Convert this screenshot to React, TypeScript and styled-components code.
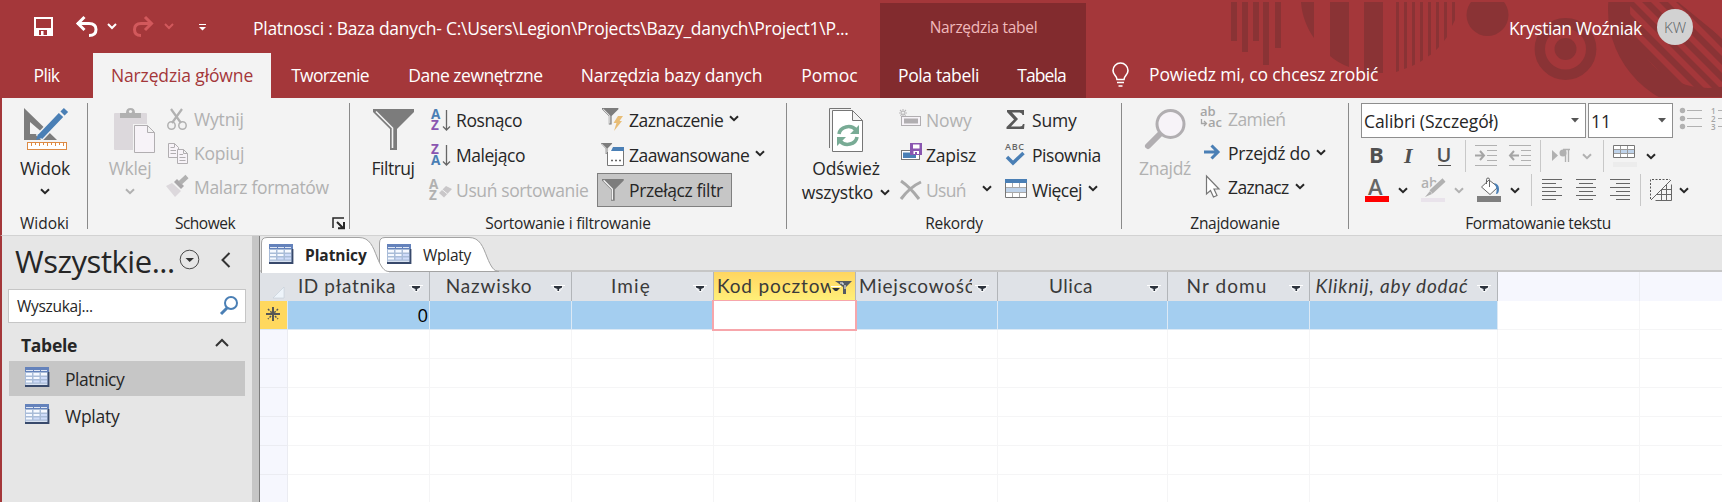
import React from 'react';
import styled, { createGlobalStyle, css } from 'styled-components';

const GlobalStyle = createGlobalStyle`
  * { box-sizing: border-box; }
  body { margin: 0; background: #fff; overflow: hidden; }
  svg { display: block; flex: none; overflow: visible; }
`;

const red = '#a4373a';
const ink = '#262626';
const muted = '#b1b1b1';
const gray = '#767676';
const blue = '#4a7fb5';

const Window = styled.div`
  width: 1722px;
  height: 502px;
  display: flex;
  flex-direction: column;
  overflow: hidden;
  font-family: 'Open Sans', 'Noto Sans', sans-serif;
  font-size: 17.5px;
  line-height: 24px;
  color: ${ink};
  white-space: nowrap;
`;

const Text = styled.span<{ $track?: number }>`
  letter-spacing: ${(p) => p.$track ?? -0.35}px;
  white-space: pre;
`;

/* ---------- title bar ---------- */
const Header = styled.header`
  position: relative;
  height: 98px;
  background: ${red};
  color: #fff;
`;
const Backdrop = styled.svg`
  position: absolute;
  inset: 0;
`;
const TitleBar = styled.div`
  position: relative;
  height: 53px;
  display: flex;
`;
const QuickAccess = styled.div`
  width: 253px;
  padding: 16px 0 0 33px;
  display: flex;
`;
const Caption = styled.div`
  width: 627px;
  padding-top: 16px;
`;
const ContextTitle = styled.div`
  width: 206px;
  margin-top: 3px;
  padding: 12px 0 0 1px;
  text-align: center;
  background: #822b2e;
  color: #f0b9bb;
  font-size: 15.5px;
`;
const Account = styled.div`
  margin-left: auto;
  width: 213px;
  display: flex;
  padding-top: 9px;
`;
const UserName = styled.div`
  padding-top: 7px;
  width: 148px;
`;
const Avatar = styled.div`
  width: 36px;
  height: 36px;
  border-radius: 50%;
  background: #d2d2d2;
  color: #5c6266;
  font-size: 15px;
  font-weight: 300;
  line-height: 36px;
  text-align: center;
`;
const TabStrip = styled.nav`
  position: relative;
  height: 45px;
  display: flex;
`;
const RibbonTab = styled.div<{ $w: number; $active?: boolean; $context?: boolean }>`
  width: ${(p) => p.$w}px;
  text-align: center;
  line-height: 45px;
  ${(p) => p.$active && css`background: #f3f3f3; color: ${red};`}
  ${(p) => p.$context && css`background: #822b2e;`}
`;
const TellMe = styled.div`
  display: flex;
  padding: 8px 0 0 25px;
  gap: 19px;
  line-height: 26px;
`;

/* ---------- ribbon ---------- */
const Ribbon = styled.section`
  height: 138px;
  display: flex;
  background: #f3f3f3;
  border-left: 2px solid ${red};
  border-bottom: 1px solid #d2d2d2;
  padding-top: 5px;
`;
const Group = styled.div<{ $w: number; $last?: boolean }>`
  flex: none;
  width: ${(p) => p.$w}px;
  height: 126px;
  display: flex;
  flex-direction: column;
  border-right: ${(p) => (p.$last ? 'none' : '1px solid #8a8a8a')};
`;
const GroupBody = styled.div`
  height: 115px;
  margin-top: -1px;
  display: flex;
`;
const GroupLabel = styled.div<{ $trail?: number }>`
  height: 12px;
  line-height: 12px;
  display: flex;
  justify-content: center;
  font-size: 15.5px;
  padding-right: ${(p) => p.$trail ?? 0}px;
`;
const LabelRow = styled.div`
  display: flex;
  & > :first-child { flex: 1; padding-right: 10px; }
`;
const BigButton = styled.div<{ $w: number; $left?: number; $off?: boolean }>`
  flex: none;
  width: ${(p) => p.$w}px;
  margin-left: ${(p) => p.$left ?? 0}px;
  padding-top: 5px;
  display: flex;
  flex-direction: column;
  align-items: center;
  color: ${(p) => (p.$off ? muted : ink)};
  & > svg:first-child { margin-bottom: 3px; }
`;
const BigArrow = styled.div`
  margin-top: 8px;
`;
const Inline = styled.div`
  display: flex;
  align-items: center;
  gap: 7px;
`;
const Column = styled.div<{ $w: number; $left?: number }>`
  flex: none;
  width: ${(p) => p.$w}px;
  margin-left: ${(p) => p.$left ?? 0}px;
`;
const Command = styled.div<{ $off?: boolean; $compact?: boolean; $on?: boolean; $icon?: number; $gap?: number }>`
  height: ${(p) => (p.$compact ? 34 : 35)}px;
  display: flex;
  align-items: center;
  color: ${(p) => (p.$off ? muted : ink)};
  & > svg:first-child { margin-right: ${(p) => p.$icon ?? 4}px; }
  & > svg:last-child:not(:first-child) { margin-left: ${(p) => p.$gap ?? 6}px; margin-top: -2px; }
  ${(p) => p.$on && css`
    width: 135px;
    height: 34px;
    margin: 1px 0 0 -5px;
    padding-left: 4px;
    background: #c6c6c6;
    border: 1px solid #7f7f7f;
  `}
`;

/* ---------- text formatting ---------- */
const FontRow = styled.div`
  display: flex;
  gap: 2px;
  height: 36px;
  padding-top: 1px;
  overflow: visible;
`;
const Combo = styled.div<{ $w: number }>`
  flex: none;
  width: ${(p) => p.$w}px;
  height: 35px;
  background: #fff;
  border: 1px solid #8e8e8e;
  display: flex;
  align-items: center;
  justify-content: space-between;
  padding: 1px 6px 0 2px;
`;
const Tools = styled.div`
  display: flex;
  height: 34px;
  margin-top: 1px;
  align-items: center;
  & + & { margin-top: 0; }
`;
const Tool = styled.div<{ $w: number }>`
  flex: none;
  width: ${(p) => p.$w}px;
`;
const Rule = styled.div`
  width: 1px;
  height: 32px;
  margin-right: 9px;
  background: #c8c8c8;
`;

/* ---------- navigation pane ---------- */
const Workspace = styled.main`
  height: 266px;
  display: flex;
  border-left: 2px solid ${red};
`;
const NavPane = styled.aside`
  flex: none;
  width: 250px;
  background: #e6e6e6;
`;
const Splitter = styled.div`
  flex: none;
  width: 8px;
  background: #c6c6c6;
  border-right: 1px solid #7d7d7d;
`;
const NavTitle = styled.div`
  height: 53px;
  display: flex;
  padding-left: 13px;
  font-size: 31px;
  line-height: 50px;
`;
const NavMenu = styled.div`
  padding: 13px 0 0 4px;
  width: 46px;
`;
const NavClose = styled.div`
  padding: 16px 0 0 0;
`;
const Search = styled.div`
  width: 238px;
  height: 34px;
  margin-left: 6px;
  display: flex;
  justify-content: space-between;
  background: #fff;
  border: 1px solid #c6c6c6;
  font-size: 15.5px;
  line-height: 33px;
  padding: 0 6px 0 8px;
  & svg { margin-top: 5px; }
`;
const NavSection = styled.div`
  height: 38px;
  display: flex;
  justify-content: space-between;
  padding: 0 22px 0 19px;
  font-weight: 700;
  line-height: 45px;
  & svg { margin: 15px 1px 0 0; }
`;
const NavItem = styled.div<{ $on?: boolean }>`
  width: 236px;
  height: ${(p) => (p.$on ? 35 : 39)}px;
  margin-left: 7px;
  padding-left: 16px;
  display: flex;
  align-items: center;
  background: ${(p) => (p.$on ? '#c6c6c6' : 'transparent')};
  & svg { margin: -4px 16px 0 0; }
`;

/* ---------- document area ---------- */
const Documents = styled.section`
  flex: 1;
  min-width: 0;
  overflow: hidden;
`;
const DocTabs = styled.div`
  height: 36px;
  display: flex;
  padding-left: 1px;
  background: linear-gradient(#e6e6e6 34px, #c6c6c6 34px);
`;
const DocTab = styled.div<{ $front?: boolean }>`
  position: relative;
  z-index: ${(p) => (p.$front ? 2 : 1)};
  width: 118px;
  height: 36px;
  padding: 2px 0 0 8px;
  display: flex;
  align-items: center;
  font-size: 15.5px;
  font-weight: ${(p) => (p.$front ? 700 : 400)};
`;
const TabShape = styled.svg`
  position: absolute;
  left: 0;
  top: 0;
`;
const TabFace = styled.div`
  position: relative;
  display: flex;
  align-items: center;
  gap: 12px;
  & svg { margin-top: -3px; }
`;
const Sheet = styled.div`
  display: grid;
  grid-template-columns: 28px repeat(5, 142px) 170px 142px 188px 142px 142px;
  grid-auto-rows: 29px;
  background: #fff;
`;
const HeadCell = styled.div<{ $tone?: 'key' | 'blank' | 'corner' }>`
  display: flex;
  align-items: center;
  overflow: hidden;
  font-family: Lato, 'Open Sans', sans-serif;
  font-size: 19px;
  color: #3a3a3a;
  background: ${(p) =>
    p.$tone === 'key' ? 'linear-gradient(#ffd560, #fff07a)' : p.$tone === 'blank' ? '#f6f7fe' : '#dfe2e7'};
  border-right: 1px solid ${(p) => (p.$tone === 'blank' ? '#ebecf2' : p.$tone === 'corner' ? '#dfe2e7' : '#b2b5b9')};
`;
const HeadTitle = styled.div<{ $start?: boolean; $w?: number }>`
  ${(p) => (p.$w ? `width: ${p.$w}px;` : 'flex: 1;')}
  min-width: 0;
  overflow: hidden;
  text-align: ${(p) => (p.$start ? 'left' : 'center')};
  padding: 0 0 2px ${(p) => (p.$start ? 3 : 0)}px;
`;
const HeadArrow = styled.div`
  width: 23px;
  padding: 2px 0 0 3px;
`;
const FilterArrow = styled.div`
  width: 24px;
  margin-left: -1px;
`;
const Cell = styled.div<{ $kind?: 'new' | 'input' | 'marker' | 'gutter' }>`
  border-right: 1px solid #f5f5f6;
  border-bottom: 1px solid #f5f5f6;
  text-align: right;
  line-height: 28px;
  font-size: 18.5px;
  color: #000;
  padding-right: 1px;
  ${(p) => p.$kind === 'new' && css`background: #a4cef0; border-color: #dce9f5;`}
  ${(p) => p.$kind === 'gutter' && css`background: #f6f7fe; border-color: #ebecf2;`}
  ${(p) => p.$kind === 'marker' && css`background: #ffd85e; border-color: #dce9f5; padding: 5px 0 0 5px;`}
  ${(p) => p.$kind === 'input' && css`
    position: relative;
    z-index: 1;
    background: #fff;
    border-color: #f7a6ab;
    box-shadow: 0 0 0 1px #f7a6ab, -1px 0 0 1px #f7a6ab;
  `}
`;

/* ---------- icons ---------- */
const Chevron = ({ c = ink }: { c?: string }) => (
  <svg width="10" height="7" viewBox="0 0 10 7"><path d="M1 1.2 5 5.2 9 1.2" fill="none" stroke={c} strokeWidth="2" /></svg>
);
const Glyph = ({ w = 24, h = 24, children }: { w?: number; h?: number; children: React.ReactNode }) => (
  <svg width={w} height={h} viewBox={`0 0 ${w} ${h}`} fontFamily="Open Sans, sans-serif">{children}</svg>
);
const TableIcon = () => (
  <Glyph w={24} h={20}>
    <rect width="24" height="20" fill="#a9bcd8" />
    <path d="M0 0H24V5H0z" fill="#6482bb" />
    <path d="M1 3.5H8M9 3.5H15M16 3.5H22" stroke="#dfe7f4" />
    <g fill="#f6f9ff">
      <path d="M1 6H7V8.5H1zM1 10H7V12H1zM1 13.500H7V15.500H1z" />
      <path d="M8.500 6H14.500V8.500H8.500zM8.500 10H14.500V12H8.500z" />
      <path d="M16 6H22V8.500H16z" />
    </g>
    <g fill="#cfdcfa"><path d="M8.500 13.500H14.500V15.500H8.500zM16 10H22V12H16zM16 13.500H22V15.500H16z" /></g>
    <path d="M1 17.300H22" stroke="#e4ebf8" strokeWidth="1" />
    <path d="M0 19H23.500V5" fill="none" stroke="#38496b" strokeWidth="1.800" />
  </Glyph>
);
const Funnel = ({ s = 1 }: { s?: number }) => (
  <g transform={`scale(${s})`}>
    <path d="M0 0H41V3L24 20V41H17V20L0 3z" fill="#7c7c7c" />
    <path d="M3 2.500 19.500 19V39" fill="none" stroke="#f3f3f3" strokeWidth={s < 1 ? 2.5 : 1.6} />
  </g>
);
const DropArrow = () => (
  <Glyph w={14} h={8}>
    <path d="M0 1.500H14" stroke="#fff" />
    <path d="M3 2H11V3.500L8 5V7H6.500V5L3 3.500z" fill="#2c323c" />
    <path d="M2 3 6 7.500H8.500L12 3" fill="none" stroke="#fff" strokeWidth=".8" />
  </Glyph>
);
const SortLetters = ({ top, bottom, a, b, x = 0 }: { top: string; bottom: string; a: string; b: string; x?: number }) => (
  <g fontSize="13.500" fontWeight="700">
    <text x={x} y="11" fill={a}>{top}</text>
    <text x={x} y="22" fill={b}>{bottom}</text>
  </g>
);
const Lines = ({ rows, c = '#666' }: { rows: [number, number][]; c?: string }) => (
  <Glyph w={22} h={22}>
    {rows.map(([x1, x2], i) => <path key={i} d={`M${x1} ${0.5 + i * 4}H${x2}`} stroke={c} />)}
  </Glyph>
);

const BackdropArt = () => (
  <Backdrop width="1722" height="98" viewBox="0 0 1722 98">
    <defs>
      <clipPath id="strip"><rect y="2" width="1722" height="95" /></clipPath>
      <clipPath id="bowl"><circle cx="1708" cy="10" r="78" /></clipPath>
    </defs>
    <g fill="#8a3335" clipPath="url(#strip)">
      <path d="M1231 2h6v39h-6zM1242 2h6v50h-6zM1253 2h6v39h-6zM1263 2h6v63h-6zM1275 2h6v46h-6z" />
      <path d="M1301 2h13v36C1307 28 1302 16 1301 2zM1330 2h19V67Q1338 63 1330 56zM1364 2h19V73H1364z" />
      <path d="M1396 2h3V71l-3 1zM1404 2h3V68l-3 1zM1412 2h3V64.500l-3 1.500zM1420 2h3V60l-3 2zM1428 2h3V54.500l-3 2zM1436 2h3V47l-3 3zM1444 2h3V37l-3 4zM1452 2h3V20l-3 6z" />
      <circle cx="1487.500" cy="15" r="21" />
      <circle cx="1565.500" cy="49" r="25.700" fill="none" stroke="#8a3335" strokeWidth="10.400" />
      <circle cx="1565.500" cy="49" r="11" />
      <circle cx="1708" cy="10" r="100" />
      <g clipPath="url(#bowl)" stroke={red} strokeWidth="5.700">
        <path d="M1603 0 1703 100M1620 0 1720 100M1636 0 1736 100M1653 0 1753 100M1670 0 1770 100M1687 0 1787 100" />
        <path d="M1590 2 1690 102V140H1590z" fill={red} stroke="none" />
      </g>
      <path d="M1678 2H1722V38z" fill={red} />
    </g>
  </Backdrop>
);

const columns: { t: string; track?: number; start?: boolean; w?: number; italic?: boolean }[] = [
  { t: 'ID płatnika', track: 0.6 },
  { t: 'Nazwisko', track: 0.85 },
  { t: 'Imię', track: 1.2 },
  { t: 'Kod pocztowy', track: 0.85, start: true, w: 117 },
  { t: 'Miejscowość', track: 0.75, start: true, w: 116 },
  { t: 'Ulica', track: 0.52 },
  { t: 'Nr domu', track: 1.1 },
  { t: 'Kliknij, aby dodać', track: 0.85, italic: true },
];

export default function App() {
  return (
    <Window>
      <GlobalStyle />
      <Header>
        <BackdropArt />
        <TitleBar>
          <QuickAccess>
            <Glyph w={42} h={22}>
              <path d="M2 2H19V19H2z" fill="none" stroke="#fff" strokeWidth="2" />
              <path d="M2 12H19V19H2z" fill="#fff" />
              <path d="M6 14H14V19H6z" fill={red} /><path d="M8 15H10.500V19H8z" fill="#fff" />
            </Glyph>
            <Glyph w={32} h={22}>
              <path d="M2 7.500H14Q21 7.500 21 13.500T14 19.500" fill="none" stroke="#fff" strokeWidth="3" />
              <path d="M9.500 1 3 7.500 9.500 14" fill="none" stroke="#fff" strokeWidth="3" />
            </Glyph>
            <Glyph w={25} h={22}><path d="M1 8 5 12 9 8" fill="none" stroke="#fff" strokeWidth="2" /></Glyph>
            <Glyph w={32} h={22}>
              <path d="M20 7.500H9Q2.500 7.500 2.500 13.500T9 19.500" fill="none" stroke="#d2595c" strokeWidth="3" />
              <path d="M13 1 19.500 7.500 13 14" fill="none" stroke="#d2595c" strokeWidth="3" />
            </Glyph>
            <Glyph w={34} h={22}><path d="M1 8 5 12 9 8" fill="none" stroke="#d2595c" strokeWidth="2" /></Glyph>
            <Glyph w={9} h={22}><path d="M1 8.500H8" stroke="#fff" /><path d="M1 11H8L4.500 14.500z" fill="#fff" /></Glyph>
          </QuickAccess>
          <Caption><Text $track={-0.27}>{'Platnosci : Baza danych- C:\\Users\\Legion\\Projects\\Bazy_danych\\Project1\\P...'}</Text></Caption>
          <ContextTitle><Text $track={-0.3}>Narzędzia tabel</Text></ContextTitle>
          <Account>
            <UserName><Text $track={-0.43}>Krystian Woźniak</Text></UserName>
            <Avatar>KW</Avatar>
          </Account>
        </TitleBar>
        <TabStrip>
          <RibbonTab $w={93}><Text $track={-0.7}>Plik</Text></RibbonTab>
          <RibbonTab $w={178} $active><Text $track={-0.13}>Narzędzia główne</Text></RibbonTab>
          <RibbonTab $w={118}><Text $track={-0.69}>Tworzenie</Text></RibbonTab>
          <RibbonTab $w={173}><Text $track={-0.5}>Dane zewnętrzne</Text></RibbonTab>
          <RibbonTab $w={219}><Text $track={-0.25}>Narzędzia bazy danych</Text></RibbonTab>
          <RibbonTab $w={97}><Text $track={0.05}>Pomoc</Text></RibbonTab>
          <RibbonTab as="div" $w={2} />
          <RibbonTab $w={117} $context><Text $track={-0.37}>Pola tabeli</Text></RibbonTab>
          <RibbonTab $w={89} $context><Text $track={-0.9}>Tabela</Text></RibbonTab>
          <TellMe>
            <Glyph w={19} h={28}>
              <path d="M6 18.500C6 15 2 14 2 9.500A7.500 7.500 0 0 1 17 9.500C17 14 13 15 13 18.500z" fill="none" stroke="#fff" strokeWidth="1.600" />
              <path d="M6 21.500H13M7.500 25H11.500" stroke="#fff" strokeWidth="1.600" />
            </Glyph>
            <Text $track={-0.14}>Powiedz mi, co chcesz zrobić</Text>
          </TellMe>
        </TabStrip>
      </Header>

      <Ribbon>
        <Group $w={86}>
          <GroupBody>
            <BigButton $w={86}>
              <Glyph w={44} h={46}>
                <path d="M1 1V33H34z M7 15 21 27H7z" fill="#7c7c7c" fillRule="evenodd" />
                <path d="M16 31 37 9" stroke="#f3f3f3" strokeWidth="9" />
                <path d="M17 30 38 8M39 7 43 3" stroke={blue} strokeWidth="6" />
                <path d="M36.500 4.500 41.500 9.500" stroke="#f3f3f3" strokeWidth="1.400" />
                <path d="M13 33 15 27 19 31z" fill={blue} />
                <rect x="4.500" y="35.500" width="39" height="7" fill="#fff" stroke="#dd8a43" />
                <path d="M8.500 36v3M12.500 36v2M16.500 36v3M20.500 36v2M24.500 36v3M28.500 36v2M32.500 36v3M36.500 36v2M40.500 36v3" stroke="#dd8a43" />
              </Glyph>
              <Text $track={-0.2}>Widok</Text>
              <BigArrow><Chevron /></BigArrow>
            </BigButton>
          </GroupBody>
          <GroupLabel><Text $track={-0.04}>Widoki</Text></GroupLabel>
        </Group>

        <Group $w={262}>
          <GroupBody>
            <BigButton $w={60} $left={12} $off>
              <Glyph w={52} h={46}>
                <rect x="10" y="6" width="33" height="37" rx="1" fill="#dcd8dc" />
                <path d="M16 11V6H22Q22 1 26.500 1T31 6H37V11z" fill="#b1b1b1" /><circle cx="26.500" cy="4.500" r="1.600" fill="#f3f3f3" />
                <path d="M29 17H44L52 25V47H29z" fill="#f3f3f3" />
                <path d="M30.500 18.500H43.500L50.500 25.500V45.500H30.500zM43.500 18.500V25.500H50.500" fill="#f7f3f8" stroke="#b1aeb1" />
              </Glyph>
              <Text $track={-0.27}>Wklej</Text>
              <BigArrow><Chevron c={muted} /></BigArrow>
            </BigButton>
            <Column $w={180} $left={6}>
              <Command $compact $off $icon={6}>
                <Glyph w={22}>
                  <path d="M5 2 15 16M16 2 6 16" stroke="#b1b1b1" strokeWidth="2.200" />
                  <circle cx="5.500" cy="18.500" r="3.700" fill="none" stroke="#b1b1b1" strokeWidth="1.500" /><circle cx="16.500" cy="18.500" r="3.700" fill="none" stroke="#b1b1b1" strokeWidth="1.500" />
                </Glyph>
                <Text $track={-0.16}>Wytnij</Text>
              </Command>
              <Command $compact $off $icon={6}>
                <Glyph w={22}>
                  <path d="M2.500 2.500H8.500L12.500 6.500V16.500H2.500zM8.500 2.500V6.500M4.500 6.500H8M4.500 9.500H10M4.500 12.500H10" fill="#f7f3f8" stroke="#b1aeb1" />
                  <path d="M11.500 8.500H17.500L21.500 12.500V22.500H11.500zM17.500 8.500V12.500H21.500M13.500 13.500H17M13.500 16.500H19.500M13.500 19.500H19.500" fill="#f7f3f8" stroke="#b1aeb1" />
                </Glyph>
                <Text $track={-0.22}>Kopiuj</Text>
              </Command>
              <Command $compact $off $icon={6}>
                <Glyph w={22}>
                  <path d="M0 11 6 8 15 16 9 22z" fill="#dcd8dc" />
                  <path d="M8 7 11 4 18 11 15 14z" fill="#a9a7a9" /><path d="M14 8 21 1.500" stroke="#b1b1b1" strokeWidth="4.500" />
                </Glyph>
                <Text $track={-0.3}>Malarz formatów</Text>
              </Command>
            </Column>
          </GroupBody>
          <LabelRow>
            <GroupLabel><Text $track={-0.5}>Schowek</Text></GroupLabel>
            <Glyph w={17} h={12}>
              <path d="M1 11V1H12" fill="none" stroke={ink} strokeWidth="1.500" /><path d="M5 5 11 11M12 5V11.200H6" fill="none" stroke={ink} strokeWidth="2" />
            </Glyph>
          </LabelRow>
        </Group>

        <Group $w={437}>
          <GroupBody>
            <BigButton $w={60} $left={13}>
              <Glyph w={41} h={46}><g transform="translate(0 2)"><Funnel /></g></Glyph>
              <Text $track={-0.5}>Filtruj</Text>
            </BigButton>
            <Column $w={173} $left={5}>
              <Command $icon={4}>
                <Glyph><SortLetters top="A" bottom="Z" a={blue} b="#8a56b0" x={3} /><path d="M18.500 2V22M15 18.500 18.500 22 22 18.500" fill="none" stroke="#666" strokeWidth="1.300" /></Glyph>
                <Text $track={-0.42}>Rosnąco</Text>
              </Command>
              <Command $icon={4}>
                <Glyph><SortLetters top="Z" bottom="A" a="#8a56b0" b={blue} x={3} /><path d="M18.500 2V22M15 18.500 18.500 22 22 18.500" fill="none" stroke="#666" strokeWidth="1.300" /></Glyph>
                <Text $track={-0.46}>Malejąco</Text>
              </Command>
              <Command $off $icon={3}>
                <Glyph w={25}><SortLetters top="A" bottom="Z" a={muted} b={muted} x={1} /><path d="M11 15 18 8 24 11 16 19.500z" fill="#c9c7c9" /><path d="M14 11.500 19.500 16" stroke="#f3f3f3" /></Glyph>
                <Text $track={-0.38}>Usuń sortowanie</Text>
              </Command>
            </Column>
            <Column $w={160} $left={1}>
              <Command $icon={3}>
                <Glyph><Funnel s={0.4} /><path d="M16 8H21L17.500 13H20L12 23 14.500 15H11.500z" fill="#e8bd76" /></Glyph>
                <Text $track={-0.5}>Zaznaczenie</Text><Chevron />
              </Command>
              <Command $icon={3}>
                <Glyph>
                  <path d="M5.500 9V22.500H21.500V4.500H11" fill="#fff" stroke="#767676" /><path d="M11 4H22V8H9z" fill={blue} />
                  <g transform="translate(-1 0)"><Funnel s={0.27} /></g>
                  <path d="M9 17.500h2M13 17.500h2M17 17.500h2" stroke="#666" strokeWidth="1.500" />
                </Glyph>
                <Text $track={-0.49}>Zaawansowane</Text><Chevron />
              </Command>
              <Command $on $icon={3}>
                <Glyph><g transform="translate(0 1)"><Funnel s={0.53} /></g></Glyph>
                <Text $track={-0.38}>Przełącz filtr</Text>
              </Command>
            </Column>
          </GroupBody>
          <GroupLabel><Text $track={-0.22}>Sortowanie i filtrowanie</Text></GroupLabel>
        </Group>

        <Group $w={335}>
          <GroupBody>
            <BigButton $w={100} $left={9}>
              <Glyph w={36} h={46}>
                <path d="M1.500 41V1.500H23" fill="none" stroke={gray} />
                <path d="M4.500 3.500H24.500L34.500 13.500V44.500H4.500zM24.500 3.500V13.500H34.500" fill="#fff" stroke={gray} />
                <path d="M11 27A9.500 8.500 0 0 1 28 23M29 30A9.500 8.500 0 0 1 12 34" fill="none" stroke="#78ab95" strokeWidth="3.600" />
                <path d="M31 18V27H22zM9 39V30H18z" fill="#78ab95" />
              </Glyph>
              <Text $track={-0.16}>Odśwież</Text>
              <Inline><Text $track={-0.23}>wszystko</Text><Chevron /></Inline>
            </BigButton>
            <Column $w={104} $left={2}>
              <Command $off $icon={4}>
                <Glyph>
                  <path d="M5 1V9M1 5H9M2 2 8 8M8 2 2 8" stroke="#b9b7b9" strokeWidth="1.100" strokeDasharray="3 2" />
                  <rect x="3.500" y="8.500" width="19" height="9" fill="#f7f3f8" stroke="#b1aeb1" /><path d="M6 10.500H20V15.500H6z" fill="#b1aeb1" />
                </Glyph>
                <Text $track={-0.09}>Nowy</Text>
              </Command>
              <Command $icon={4}>
                <Glyph>
                  <rect x="3.500" y="7.500" width="18" height="9" fill="#fff" stroke={gray} /><path d="M5 9.500H18V15H5z" fill={blue} />
                  <path d="M12 0H24V12H12z" fill="#8a56b0" /><path d="M15 1.500H21.500V5.500H15zM15.500 8H21V11H15.500z" fill="#fff" /><path d="M17 9H19V11H17z" fill="#8a56b0" />
                </Glyph>
                <Text $track={-0.24}>Zapisz</Text>
              </Command>
              <Command $off $icon={4} $gap={16}>
                <Glyph><path d="M3 3Q12 9 21 21M23 4Q12 9 3 21" fill="none" stroke="#a9a9a9" strokeWidth="3" /></Glyph>
                <Text $track={-0.7}>Usuń</Text><Chevron />
              </Command>
            </Column>
            <Column $w={112} $left={1}>
              <Command $icon={5}>
                <Glyph><path d="M4 2H21V7H19.500Q19 4.500 16.500 4.500H9L15 11 8 18.500H17Q19.500 18.500 20 16H21.500L21 21H3.500V19L11 11.500 4 4z" fill="#585858" /></Glyph>
                <Text $track={-0.18}>Sumy</Text>
              </Command>
              <Command $icon={5}>
                <Glyph><text x="2" y="7" fontSize="9" fontWeight="600" fill="#666" textLength="19">ABC</text><path d="M4 14 10 20 20.500 10" fill="none" stroke={blue} strokeWidth="3.500" /></Glyph>
                <Text $track={-0.43}>Pisownia</Text>
              </Command>
              <Command $icon={5}>
                <Glyph>
                  <path d="M2.500 1.500H23.500V19.500H2.500z" fill="#fff" stroke={gray} /><path d="M2 1H24V5H2z" fill={blue} />
                  <path d="M3 9.500H23V14.500H3z" fill="#bfd3ea" /><path d="M3 9.500H23M3 14.500H23M9.500 5V9.500M16.500 5V9.500M9.500 14.500V19M16.500 14.500V19" stroke="#a9a9a9" />
                </Glyph>
                <Text $track={-0.52}>Więcej</Text><Chevron />
              </Command>
            </Column>
          </GroupBody>
          <GroupLabel><Text $track={-0.26}>Rekordy</Text></GroupLabel>
        </Group>

        <Group $w={227}>
          <GroupBody>
            <BigButton $w={60} $left={13} $off>
              <Glyph w={41} h={46}><path d="M16 26 3 39" stroke="#b1aeb1" strokeWidth="6" strokeLinecap="round" /><circle cx="25.500" cy="17" r="13.500" fill="#f7f3f8" stroke="#b1aeb1" strokeWidth="3" /></Glyph>
              <Text $track={-0.32}>Znajdź</Text>
            </BigButton>
            <Column $w={130} $left={4}>
              <Command $compact $off $icon={5}>
                <Glyph><g fontSize="13" fill="#a5a5a5" fontWeight="600"><text x="1" y="9">ab</text><text x="9" y="20">ac</text></g><path d="M2.500 12V16.500H7M5 14 7.500 16.500 5 19" fill="none" stroke="#a5a5a5" strokeWidth="1.300" /></Glyph>
                <Text $track={-0.6}>Zamień</Text>
              </Command>
              <Command $compact $icon={5}>
                <Glyph><path d="M5 11H18M12.500 4.500 19 11 12.500 17.500" fill="none" stroke={blue} strokeWidth="3" /></Glyph>
                <Text $track={-0.25}>Przejdź do</Text><Chevron />
              </Command>
              <Command $compact $icon={5}>
                <Glyph><path d="M7.500 1V19L11.500 15.500 14.500 22 18 20.500 15 14H20z" fill="#fff" stroke="#767676" strokeWidth="1.200" /></Glyph>
                <Text $track={-0.63}>Zaznacz</Text><Chevron />
              </Command>
            </Column>
          </GroupBody>
          <GroupLabel><Text $track={-0.28}>Znajdowanie</Text></GroupLabel>
        </Group>

        <Group $w={378} $last>
          <GroupBody>
            <Column $w={366} $left={12}>
              <FontRow>
                <Combo $w={225}><Text $track={-0.07}>Calibri (Szczegół)</Text><Glyph w={8} h={6}><path d="M0 0H8L4 4.500z" fill="#555" /></Glyph></Combo>
                <Combo $w={85}><Text $track={0}>11</Text><Glyph w={8} h={6}><path d="M0 0H8L4 4.500z" fill="#555" /></Glyph></Combo>
                <Glyph w={34} h={35}><g fill="#b1b1b1"><circle cx="7.500" cy="7.500" r="2.700" /><circle cx="7.500" cy="15.500" r="2.700" /><circle cx="7.500" cy="23.500" r="2.700" /></g><path d="M12 7.500H27M12 15.500H27M12 23.500H27" stroke="#b1b1b1" /></Glyph>
                <Glyph w={14} h={35}><g fontSize="8" fill="#a5a5a5" fontWeight="600"><text x="0" y="11">1</text><text x="0" y="19">2</text><text x="0" y="27">3</text></g><path d="M7 7.500H14M7 15.500H14M7 23.500H14" stroke="#b1b1b1" /></Glyph>
              </FontRow>
              <Tools>
                <Tool $w={36}><Glyph w={36} h={28}><text x="8" y="21" fontSize="22" fontWeight="700" fill="#505050">B</text></Glyph></Tool>
                <Tool $w={34}><Glyph w={34} h={28}><text x="7" y="21" fontSize="22" fontStyle="italic" fontWeight="700" fontFamily="Liberation Serif, serif" fill="#505050">I</text></Glyph></Tool>
                <Tool $w={34}><Glyph w={34} h={28}><text x="5.500" y="20" fontSize="20" fontWeight="600" fill="#505050">U</text><path d="M7 23.500H20" stroke="#505050" /></Glyph></Tool>
                <Rule />
                <Tool $w={34}><Glyph w={22} h={22}><path d="M0 .5H22M12 5.500H22M12 10.500H22M12 15.500H22M0 20.500H22" stroke="#b1b1b1" /><path d="M0 10.500H9M5 6 9 10.500 5 15" fill="none" stroke="#a5a5a5" strokeWidth="2" /></Glyph></Tool>
                <Tool $w={31}><Glyph w={22} h={22}><path d="M0 .5H22M12 5.500H22M12 10.500H22M12 15.500H22M0 20.500H22" stroke="#b1b1b1" /><path d="M10 10.500H1M5 6 1 10.500 5 15" fill="none" stroke="#a5a5a5" strokeWidth="2" /></Glyph></Tool>
                <Rule />
                <Tool $w={32}><Glyph w={22} h={22}><path d="M2 5 8 10.500 2 16z" fill="#b1b1b1" /><path d="M15.500 5V17M18.500 5V17M20 4.500H13" stroke="#b1b1b1" strokeWidth="1.300" /><circle cx="13" cy="8" r="3.500" fill="#b1b1b1" /></Glyph></Tool>
                <Tool $w={21}><Chevron c={muted} /></Tool>
                <Rule />
                <Tool $w={33}><Glyph w={24} h={22}><path d="M.5 .5H21.500V12.500H.5z" fill="#fff" stroke={gray} /><path d="M1 4.500H21V8.500H1z" fill="#bfd3ea" /><path d="M1 4.500H21M1 8.500H21M7.500 1V12M14.500 1V12" stroke="#9a9a9a" /><path d="M0 17H24V22H0z" fill="#ececec" /></Glyph></Tool>
                <Tool $w={20}><Chevron /></Tool>
              </Tools>
              <Tools>
                <Tool $w={37}><Glyph w={37} h={28}><text x="7" y="19" fontSize="22" fontWeight="600" fill="#666">A</text><path d="M4 20H28V26H4z" fill="#ff0000" /></Glyph></Tool>
                <Tool $w={23}><Chevron /></Tool>
                <Tool $w={33}><Glyph w={26} h={28}><text x="0" y="12" fontSize="14" fontWeight="600" fill="#b1b1b1">ab</text><path d="M8 18 22 5" stroke="#f3f3f3" strokeWidth="8" /><path d="M10 16 23 4" stroke="#b1b1b1" strokeWidth="4.500" /><path d="M4 21 9 15 11 18z" fill="#b1b1b1" /><path d="M0 22H24V26H0z" fill="#e9e3eb" /></Glyph></Tool>
                <Tool $w={23}><Chevron c={muted} /></Tool>
                <Tool $w={33}><Glyph w={26} h={28}><path d="M12 4 21 11 13 18.500 4.500 11z" fill="#fff" stroke="#666" /><path d="M9.500 8V3.500Q9.500 2 11 2T12.500 3.500V11" fill="none" stroke="#666" /><path d="M17 7Q22 8 22 13T19 18Q21 13 17 7z" fill={blue} /><path d="M0 20H24V26H0z" fill="#7f7f7f" /></Glyph></Tool>
                <Tool $w={21}><Chevron /></Tool>
                <Rule />
                <Tool $w={34}><Lines rows={[[1, 21], [1, 15], [1, 21], [1, 15], [1, 21], [1, 15]]} /></Tool>
                <Tool $w={34}><Lines rows={[[1, 21], [4, 18], [1, 21], [4, 18], [1, 21], [4, 18]]} /></Tool>
                <Tool $w={31}><Lines rows={[[1, 21], [7, 21], [1, 21], [7, 21], [1, 21], [7, 21]]} /></Tool>
                <Rule />
                <Tool $w={29}><Glyph w={22} h={22}><path d="M.5 20V.5H20" fill="none" stroke="#555" strokeDasharray="2 1.500" /><path d="M1 21 21 1" stroke="#666" /><path d="M21.500 5.500V21.500H5.500M21 10.500H11M21 15.500H7M11.500 11V21M16.500 6V21" fill="none" stroke="#666" /></Glyph></Tool>
                <Tool $w={20}><Chevron /></Tool>
              </Tools>
            </Column>
          </GroupBody>
          <GroupLabel><Text $track={-0.39}>Formatowanie tekstu</Text></GroupLabel>
        </Group>
      </Ribbon>

      <Workspace>
        <NavPane>
          <NavTitle>
            <Text $track={-0.46}>Wszystkie...</Text>
            <NavMenu><Glyph w={21} h={21}><circle cx="10.500" cy="10.500" r="9.300" fill="none" stroke="#4a4a4a" /><path d="M6.500 9H15L10.700 13z" fill="#333" /></Glyph></NavMenu>
            <NavClose><Glyph w={10} h={16}><path d="M8.500 1 1.500 8 8.500 15" fill="none" stroke="#333" strokeWidth="2" /></Glyph></NavClose>
          </NavTitle>
          <Search>
            <Text $track={-0.3}>Wyszukaj...</Text>
            <Glyph w={20} h={21}><path d="M8 13 2 19" stroke={blue} strokeWidth="3" /><circle cx="12" cy="8" r="6" fill="none" stroke={blue} strokeWidth="2" /></Glyph>
          </Search>
          <NavSection>
            <Text $track={-0.29}>Tabele</Text>
            <Glyph w={14} h={9}><path d="M1 8 7 2 13 8" fill="none" stroke="#333" strokeWidth="2" /></Glyph>
          </NavSection>
          <NavItem $on><TableIcon /><Text $track={-0.49}>Platnicy</Text></NavItem>
          <NavItem><TableIcon /><Text $track={-0.25}>Wplaty</Text></NavItem>
        </NavPane>
        <Splitter />
        <Documents>
          <DocTabs>
            <DocTab $front>
              <TabShape width="128" height="36" viewBox="0 0 128 36">
                <path d="M.5 37V7Q.5 1.500 6 1.500H98C109 1.500 112 11 116 21S123 35.500 128 35.500V37z" fill="#fff" />
                <path d="M.5 37V7Q.5 1.500 6 1.500H98C109 1.500 112 11 116 21S123 35.500 128 35.500" fill="none" stroke="#a3a3a3" />
              </TabShape>
              <TabFace><TableIcon /><Text $track={-0.06}>Platnicy</Text></TabFace>
            </DocTab>
            <DocTab>
              <TabShape width="121" height="36" viewBox="0 0 121 36">
                <path d="M.5 35.500V7Q.5 1.500 6 1.500H90C101 1.500 104 11 108 21S115 35.500 120 35.500z" fill="#fff" stroke="#a3a3a3" />
              </TabShape>
              <TabFace><TableIcon /><Text $track={-0.27}>Wplaty</Text></TabFace>
            </DocTab>
          </DocTabs>
          <Sheet>
            <HeadCell $tone="corner"><Glyph w={26} h={28}><path d="M13 25 24 14V25z" fill="#eef4fa" stroke="#c3cdd6" strokeWidth=".6" /></Glyph></HeadCell>
            {columns.map((c) => (
              <HeadCell key={c.t} $tone={c.t.startsWith('Kod') ? 'key' : undefined}>
                <HeadTitle $start={c.start} $w={c.w}>
                  <Text as={c.italic ? 'em' : 'span'} $track={c.track}>{c.t}</Text>
                </HeadTitle>
                {c.t.startsWith('Kod') ? (
                  <FilterArrow>
                    <Glyph w={22} h={16}>
                      <path d="M5 2H22L16 8V15H13V8L8 4z" fill="#555a62" /><path d="M10 4H13V6M15 6V10" stroke="#fff" fill="none" /><path d="M1 7.500H11" stroke="#fff" /><path d="M2 9H10L7 12H5z" fill="#2c323c" />
                    </Glyph>
                  </FilterArrow>
                ) : (
                  <HeadArrow><DropArrow /></HeadArrow>
                )}
              </HeadCell>
            ))}
            <HeadCell $tone="blank" /><HeadCell $tone="blank" />

            <Cell $kind="marker"><Glyph w={16} h={16}><path d="M8 1V15M1 8H15" stroke="#555" strokeWidth="2" /><path d="M3 3 13 13M13 3 3 13" stroke="#555" strokeWidth="1.500" strokeDasharray="2 1.300" /></Glyph></Cell>
            {columns.map((c, i) => (
              <Cell key={c.t} $kind={i === 3 ? 'input' : 'new'}>{i === 0 ? '0' : null}</Cell>
            ))}
            <Cell /><Cell />
            {Array.from({ length: 66 }, (_, i) => <Cell key={i} $kind={i % 11 === 0 ? 'gutter' : undefined} />)}
          </Sheet>
        </Documents>
      </Workspace>
    </Window>
  );
}
